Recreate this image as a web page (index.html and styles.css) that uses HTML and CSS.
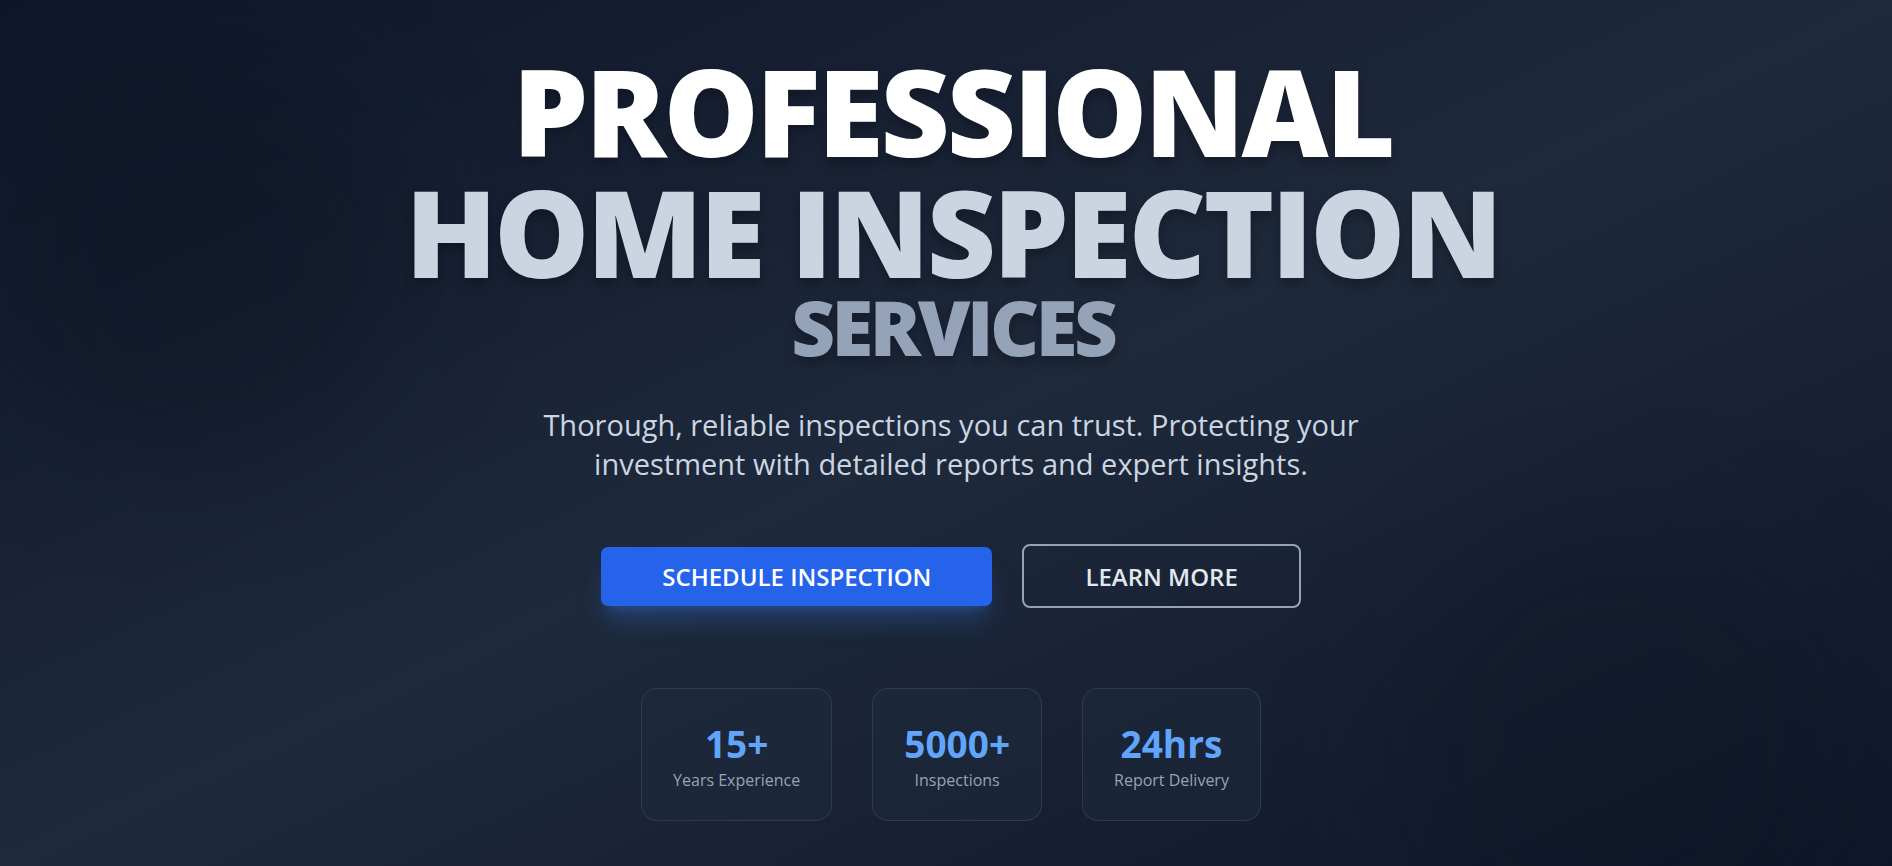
FILE: index.html
```html
<!DOCTYPE html>
<html lang="en">
<head>
<meta charset="utf-8">
<title>Professional Home Inspection Services</title>
<link rel="stylesheet" href="styles.css">
</head>
<body>
<main class="hero">
  <div class="glow glow-left"></div>
  <div class="glow glow-right"></div>
  <div class="content">
    <h1 class="title">
      <span class="line line-1">PROFESSIONAL</span>
      <span class="line line-2">HOME INSPECTION</span>
      <span class="line line-3">SERVICES</span>
    </h1>
    <p class="lead">Thorough, reliable inspections you can trust. Protecting your investment with detailed reports and expert insights.</p>
    <div class="actions">
      <a class="btn btn-primary" href="#">SCHEDULE INSPECTION</a>
      <a class="btn btn-outline" href="#">LEARN MORE</a>
    </div>
    <div class="stats">
      <div class="stat">
        <div class="stat-value">15+</div>
        <div class="stat-label">Years Experience</div>
      </div>
      <div class="stat">
        <div class="stat-value">5000+</div>
        <div class="stat-label">Inspections</div>
      </div>
      <div class="stat">
        <div class="stat-value">24hrs</div>
        <div class="stat-label">Report Delivery</div>
      </div>
    </div>
  </div>
</main>
</body>
</html>
```

FILE: styles.css
```css
* { box-sizing: border-box; }

html, body {
  margin: 0;
  padding: 0;
}

body {
  font-family: "Open Sans", "Noto Sans", sans-serif;
  background: #0f172a;
}

.hero {
  position: relative;
  overflow: hidden;
  min-height: 100vh;
  display: flex;
  align-items: center;
  justify-content: center;
  background: linear-gradient(to bottom right, #0f172a 0%, #1e293b 50%, #0f172a 100%);
}

.glow {
  position: absolute;
  border-radius: 50%;
  pointer-events: none;
  filter: blur(60px);
}

.glow-left {
  width: 420px;
  height: 420px;
  left: -20px;
  top: 40px;
  background: rgba(10, 16, 32, 0.35);
}

.glow-right {
  width: 460px;
  height: 460px;
  right: 40px;
  bottom: -120px;
  background: rgba(10, 16, 32, 0.25);
}

.content {
  position: relative;
  display: flex;
  flex-direction: column;
  align-items: center;
  text-align: center;
  padding: 6px 0 0 10px;
}

.title {
  margin: 0;
  font-weight: 800;
  line-height: 1;
  display: flex;
  flex-direction: column;
  align-items: center;
  text-shadow: 0 6px 12px rgba(0, 0, 0, 0.28);
}

.line { display: block; }

.line-1 {
  font-size: 120px;
  color: #ffffff;
  letter-spacing: -3px;
  margin-right: -3px;
}

.line-2 {
  font-size: 120px;
  color: #cbd5e1;
  margin-top: 1px;
  letter-spacing: -3px;
  margin-right: -3px;
}

.line-3 {
  font-size: 76px;
  color: #94a3b8;
  margin-top: -3px;
  letter-spacing: -3.5px;
  margin-right: -3.5px;
}

.lead {
  margin: 40px 0 0;
  max-width: 896px;
  font-size: 29px;
  font-weight: 500;
  line-height: 39px;
  color: #cbd5e1;
}

.actions {
  margin-top: 61px;
  display: flex;
  align-items: center;
  gap: 30px;
}

.btn {
  display: inline-flex;
  align-items: center;
  justify-content: center;
  font-size: 24px;
  font-weight: 600;
  text-decoration: none;
  white-space: nowrap;
}

.btn-primary {
  height: 59px;
  padding: 0 61px;
  background: #2563eb;
  color: #ffffff;
  border-radius: 7px;
  box-shadow: 0 20px 25px -5px rgba(59, 130, 246, 0.25), 0 8px 10px -6px rgba(59, 130, 246, 0.25);
}

.btn-outline {
  height: 64px;
  padding: 0 61px;
  border: 2px solid #94a3b8;
  color: #e2e8f0;
  border-radius: 8px;
}

.stats {
  margin-top: 80px;
  display: flex;
  gap: 40px;
}

.stat {
  padding: 35px 31px 28px;
  border: 1px solid rgba(71, 85, 105, 0.45);
  background: rgba(30, 41, 59, 0.5);
  border-radius: 16px;
}

.stat-value {
  font-size: 37px;
  line-height: 40px;
  font-weight: 700;
  color: #60a5fa;
}

.stat-label {
  margin-top: 4px;
  font-size: 16px;
  line-height: 24px;
  color: #94a3b8;
}
```
